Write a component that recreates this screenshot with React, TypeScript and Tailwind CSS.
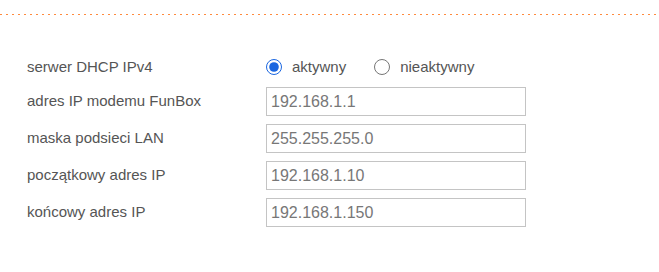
import React from 'react';

const rows = [
  { label: 'adres IP modemu FunBox', value: '192.168.1.1' },
  { label: 'maska podsieci LAN', value: '255.255.255.0' },
  { label: 'początkowy adres IP', value: '192.168.1.10' },
  { label: 'końcowy adres IP', value: '192.168.1.150' },
];

const App: React.FC = () => {
  return (
    <div className="w-[659px] h-[272px] bg-white font-['Liberation_Sans',Arial,sans-serif] overflow-hidden">
      {/* dotted orange divider */}
      <div className="pt-[14px]">
        <div className="h-px w-full bg-[repeating-linear-gradient(to_right,#ff8a3d_0_2px,transparent_2px_6px)]" />
      </div>

      <div className="pl-[27px] pt-[37px]">
        <div className="flex items-center h-[30px]">
          <span className="w-[239px] text-[15px] text-[#555]">serwer DHCP IPv4</span>
          <label className="flex items-center gap-[10px] text-[15px] text-[#555]">
            <input type="radio" name="dhcp" defaultChecked className="m-0 w-4 h-4 accent-[#1a66e0]" />
            aktywny
          </label>
          <label className="flex items-center gap-[10px] text-[15px] text-[#555] ml-[28px]">
            <input type="radio" name="dhcp" className="m-0 w-4 h-4" />
            nieaktywny
          </label>
        </div>

        <div className="flex flex-col gap-[8px] mt-[5px]">
          {rows.map((r) => (
            <div key={r.label} className="flex items-center h-[29px]">
              <span className="w-[239px] text-[15px] text-[#555]">{r.label}</span>
              <input
                type="text"
                defaultValue={r.value}
                className="w-[260px] h-[29px] border border-[#c4c4c4] px-[4px] text-[16px] text-[#777] outline-none font-['Liberation_Sans',Arial,sans-serif]"
              />
            </div>
          ))}
        </div>
      </div>
    </div>
  );
};

export default App;
